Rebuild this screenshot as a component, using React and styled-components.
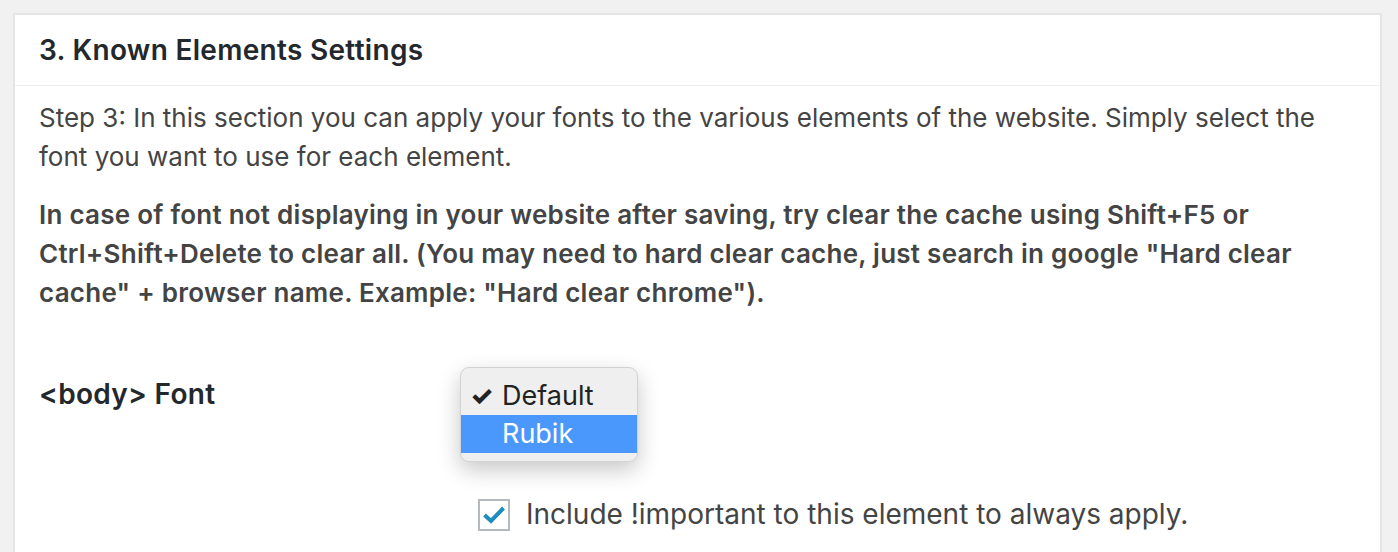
import styled, { createGlobalStyle } from 'styled-components';

const GlobalStyle = createGlobalStyle`
	body {
		margin: 0;
		background: #f1f1f1;
		font-family: Inter, "Liberation Sans", sans-serif;
		color: #444;
	}
`;

function App() {
	return (
		<Page>
			<GlobalStyle />
			<Postbox>
				<Handle>3. Known Elements Settings</Handle>
				<Inside>
					<Intro>
						Step 3: In this section you can apply your fonts to the various elements of the website. Simply select the
						<br />
						font you want to use for each element.
					</Intro>
					<Notice>
						In case of font not displaying in your website after saving, try clear the cache using Shift+F5 or
						<br />
						Ctrl+Shift+Delete to clear all. (You may need to hard clear cache, just search in google "Hard clear
						<br />
						cache" + browser name. Example: "Hard clear chrome").
					</Notice>
					<FieldRow>
						<FieldLabel>&lt;body&gt; Font</FieldLabel>
						<FieldControl>
							<Menu>
								<MenuItem>
									<Check>✓</Check>
									Default
								</MenuItem>
								<MenuItem active>Rubik</MenuItem>
							</Menu>
							<CheckRow>
								<Box>
									<svg width="22" height="18" viewBox="0 0 22 18">
										<path d="M1.5 9 L8 15 L20.5 2" fill="none" stroke="#1e8cbe" strokeWidth="4" />
									</svg>
								</Box>
								Include !important to this element to always apply.
							</CheckRow>
						</FieldControl>
					</FieldRow>
				</Inside>
			</Postbox>
		</Page>
	);
}

export default App;

const Page = styled.div`
	padding: 13px 16px 0 13px;
	height: 552px;
	box-sizing: border-box;
	overflow: hidden;
`;

const Postbox = styled.div`
	background: #fff;
	border: 2px solid #e5e5e5;
	border-bottom: none;
	min-height: 600px;
`;

const Handle = styled.h2`
	margin: 0;
	padding: 16px 24px 15px;
	font-size: 28px;
	font-weight: 600;
	letter-spacing: 0.3px;
	line-height: 39px;
	color: #23282d;
	border-bottom: 1px solid #eee;
`;

const Inside = styled.div`
	padding: 0 24px;
	font-size: 26px;
	line-height: 39px;
`;

const Intro = styled.p`
	margin: 12px 0 0;
`;

const Notice = styled.p`
	margin: 19px 0 0;
	font-weight: 600;
	letter-spacing: 0.25px;
`;

const FieldRow = styled.div`
	display: grid;
	grid-template-columns: 421px 1fr;
	margin-top: 55px;
	font-size: 28px;
`;

const FieldLabel = styled.div`
	padding-top: 8px;
	font-weight: 600;
	letter-spacing: 0.3px;
	color: #23282d;
`;

const FieldControl = styled.div`
	display: flex;
	flex-direction: column;
	align-items: flex-start;
`;

const Menu = styled.div`
	width: 178px;
	box-sizing: border-box;
	padding: 8px 0;
	background: #efefef;
	border: 1px solid #d2d2d2;
	border-radius: 9px;
	box-shadow: 0 8px 22px rgba(0, 0, 0, 0.22);
	font-size: 27px;
`;

const MenuItem = styled.div`
	position: relative;
	padding-left: 41px;
	height: ${(p) => (p.active ? '38px' : '39px')};
	line-height: ${(p) => (p.active ? '38px' : '39px')};
	background: ${(p) => (p.active ? '#4b98fc' : 'transparent')};
	color: ${(p) => (p.active ? '#fff' : '#222')};
`;

const Check = styled.span`
	position: absolute;
	left: 9px;
	font-size: 26px;
	font-weight: 800;
`;

const CheckRow = styled.label`
	display: flex;
	align-items: center;
	gap: 16px;
	margin: 33px 0 0 18px;
	color: #444;
`;

const Box = styled.span`
	display: flex;
	align-items: center;
	justify-content: center;
	width: 32px;
	height: 32px;
	box-sizing: border-box;
	border: 2px solid #b4b9be;
	background: #fff;
`;
